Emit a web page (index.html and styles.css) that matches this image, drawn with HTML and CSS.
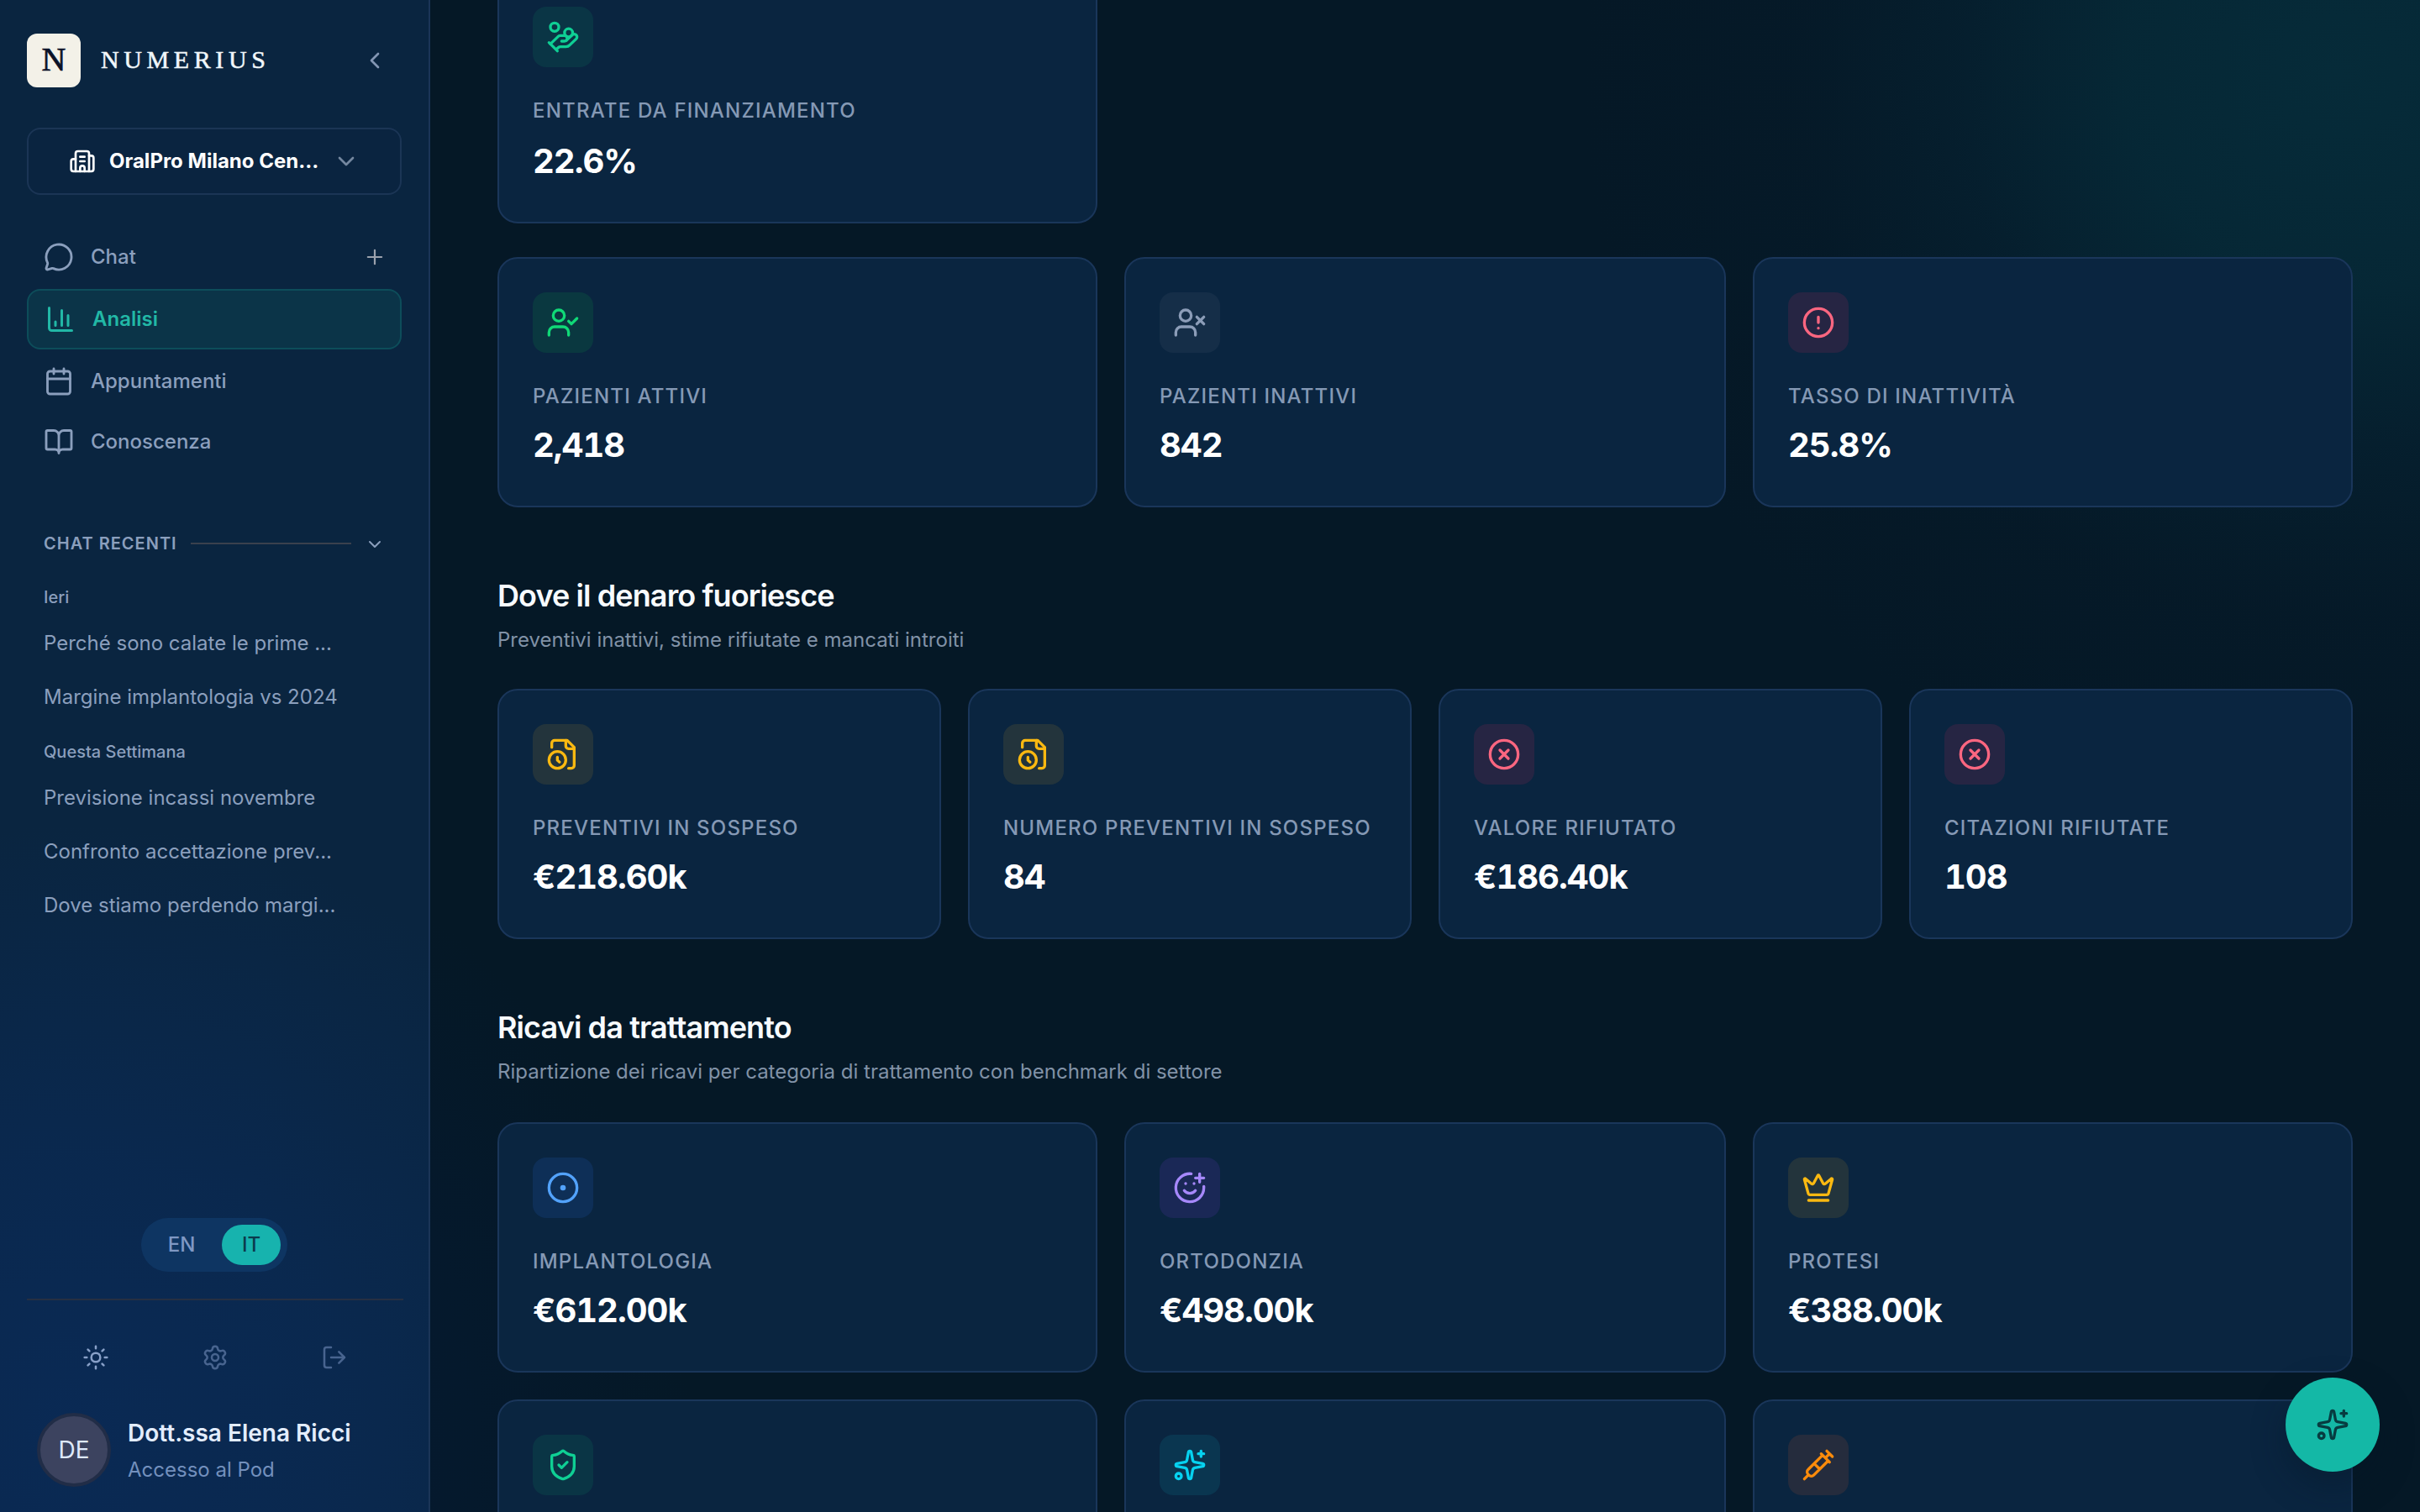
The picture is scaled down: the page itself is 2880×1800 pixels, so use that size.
FILE: index.html
```html
<!DOCTYPE html>
<html lang="it">
<head>
<meta charset="utf-8">
<title>Numerius – Analisi</title>
<link rel="stylesheet" href="styles.css">
</head>
<body>
<svg class="sprite" aria-hidden="true">
  <symbol id="chevron-left" viewBox="0 0 24 24"><path d="m15 18-6-6 6-6"/></symbol>
  <symbol id="chevron-down" viewBox="0 0 24 24"><path d="m6 9 6 6 6-6"/></symbol>
  <symbol id="plus" viewBox="0 0 24 24"><path d="M5 12h14M12 5v14"/></symbol>
  <symbol id="building" viewBox="0 0 24 24"><path d="M10 12h4M10 8h4M14 21v-3a2 2 0 0 0-4 0v3"/><path d="M6 10H4a2 2 0 0 0-2 2v7a2 2 0 0 0 2 2h16a2 2 0 0 0 2-2V9a2 2 0 0 0-2-2h-2"/><path d="M6 21V5a2 2 0 0 1 2-2h8a2 2 0 0 1 2 2v16"/></symbol>
  <symbol id="message" viewBox="0 0 24 24"><path d="M2.992 16.342a2 2 0 0 1 .094 1.167l-1.065 3.29a1 1 0 0 0 1.236 1.168l3.413-.998a2 2 0 0 1 1.099.092 10 10 0 1 0-4.777-4.719"/></symbol>
  <symbol id="chart" viewBox="0 0 24 24"><path d="M3 3v16a2 2 0 0 0 2 2h16M18 17V9M13 17V5M8 17v-3"/></symbol>
  <symbol id="calendar" viewBox="0 0 24 24"><path d="M8 2v4M16 2v4M3 10h18"/><rect x="3" y="4" width="18" height="18" rx="2"/></symbol>
  <symbol id="book" viewBox="0 0 24 24"><path d="M12 7v14M3 18a1 1 0 0 1-1-1V4a1 1 0 0 1 1-1h5a4 4 0 0 1 4 4 4 4 0 0 1 4-4h5a1 1 0 0 1 1 1v13a1 1 0 0 1-1 1h-6a3 3 0 0 0-3 3 3 3 0 0 0-3-3z"/></symbol>
  <symbol id="sun" viewBox="0 0 24 24"><circle cx="12" cy="12" r="4"/><path d="M12 2v2M12 20v2M4.93 4.93l1.41 1.41M17.66 17.66l1.41 1.41M2 12h2M20 12h2M6.34 17.66l-1.41 1.41M19.07 4.93l-1.41 1.41"/></symbol>
  <symbol id="settings" viewBox="0 0 24 24"><path d="M9.671 4.136a2.34 2.34 0 0 1 4.659 0 2.34 2.34 0 0 0 3.319 1.915 2.34 2.34 0 0 1 2.33 4.033 2.34 2.34 0 0 0 0 3.831 2.34 2.34 0 0 1-2.33 4.033 2.34 2.34 0 0 0-3.319 1.915 2.34 2.34 0 0 1-4.659 0 2.34 2.34 0 0 0-3.32-1.915 2.34 2.34 0 0 1-2.33-4.033 2.34 2.34 0 0 0 0-3.831A2.34 2.34 0 0 1 6.35 6.051a2.34 2.34 0 0 0 3.319-1.915"/><circle cx="12" cy="12" r="3"/></symbol>
  <symbol id="logout" viewBox="0 0 24 24"><path d="m16 17 5-5-5-5M21 12H9M9 21H5a2 2 0 0 1-2-2V5a2 2 0 0 1 2-2h4"/></symbol>
  <symbol id="hand-coins" viewBox="0 0 24 24"><path d="M11 15h2a2 2 0 1 0 0-4h-3c-.6 0-1.1.2-1.4.6L3 17"/><path d="m7 21 1.6-1.4c.3-.4.8-.6 1.4-.6h4c1.1 0 2.1-.4 2.8-1.2l4.6-4.4a2 2 0 0 0-2.75-2.91l-4.2 3.9M2 16l6 6"/><circle cx="16" cy="9" r="2.9"/><circle cx="6" cy="5" r="3"/></symbol>
  <symbol id="user-check" viewBox="0 0 24 24"><path d="m16 11 2 2 4-4M16 21v-2a4 4 0 0 0-4-4H6a4 4 0 0 0-4 4v2"/><circle cx="9" cy="7" r="4"/></symbol>
  <symbol id="user-x" viewBox="0 0 24 24"><path d="M16 21v-2a4 4 0 0 0-4-4H6a4 4 0 0 0-4 4v2M17 8l5 5M22 8l-5 5"/><circle cx="9" cy="7" r="4"/></symbol>
  <symbol id="alert" viewBox="0 0 24 24"><circle cx="12" cy="12" r="10"/><path d="M12 8v4M12 16h.01"/></symbol>
  <symbol id="file-clock" viewBox="0 0 24 24"><path d="M16 22h2a2 2 0 0 0 2-2V7l-5-5H6a2 2 0 0 0-2 2v3"/><path d="M14 2v4a2 2 0 0 0 2 2h4"/><circle cx="8" cy="16" r="6"/><path d="M9.5 17.5 8 16.25V14"/></symbol>
  <symbol id="circle-x" viewBox="0 0 24 24"><circle cx="12" cy="12" r="10"/><path d="m15 9-6 6M9 9l6 6"/></symbol>
  <symbol id="circle-dot" viewBox="0 0 24 24"><circle cx="12" cy="12" r="10"/><circle cx="12" cy="12" r="1"/></symbol>
  <symbol id="smile-plus" viewBox="0 0 24 24"><path d="M22 11v1a10 10 0 1 1-9-10"/><path d="M8 14s1.5 2 4 2 4-2 4-2M9 9h.01M15 9h.01M16 5h6M19 2v6"/></symbol>
  <symbol id="crown" viewBox="0 0 24 24"><path d="M11.562 3.266a.5.5 0 0 1 .876 0L15.39 8.87a1 1 0 0 0 1.516.294L21.183 5.5a.5.5 0 0 1 .798.519l-2.834 10.246a1 1 0 0 1-.956.734H5.81a1 1 0 0 1-.957-.734L2.02 6.02a.5.5 0 0 1 .798-.519l4.276 3.664a1 1 0 0 0 1.516-.294z"/><path d="M5 21h14"/></symbol>
  <symbol id="shield" viewBox="0 0 24 24"><path d="M20 13c0 5-3.5 7.5-7.66 8.95a1 1 0 0 1-.67-.01C7.5 20.5 4 18 4 13V6a1 1 0 0 1 1-1c2 0 4.5-1.2 6.24-2.72a1.17 1.17 0 0 1 1.52 0C14.51 3.81 17 5 19 5a1 1 0 0 1 1 1z"/><path d="m9 12 2 2 4-4"/></symbol>
  <symbol id="sparkles" viewBox="0 0 24 24"><path d="M11.017 2.814a1 1 0 0 1 1.966 0l1.051 5.558a2 2 0 0 0 1.594 1.594l5.558 1.051a1 1 0 0 1 0 1.966l-5.558 1.051a2 2 0 0 0-1.594 1.594l-1.051 5.558a1 1 0 0 1-1.966 0l-1.051-5.558a2 2 0 0 0-1.594-1.594l-5.558-1.051a1 1 0 0 1 0-1.966l5.558-1.051a2 2 0 0 0 1.594-1.594zM20 2v4M22 4h-4"/><circle cx="4" cy="20" r="2"/></symbol>
  <symbol id="syringe" viewBox="0 0 24 24"><path d="m18 2 4 4M17 7l3-3M19 9 8.7 19.3c-1 1-2.5 1-3.4 0l-.6-.6c-1-1-1-2.5 0-3.4L15 5M9 11l4 4M5 19l-3 3M14 4l6 6"/></symbol>
</svg>

<div class="app">
  <aside class="sidebar">
    <header class="brand">
      <span class="brand-mark">N</span>
      <span class="brand-name">NUMERIUS</span>
      <svg class="icon brand-collapse"><use href="#chevron-left"/></svg>
    </header>

    <button class="clinic">
      <svg class="icon"><use href="#building"/></svg>
      <span class="clinic-name">OralPro Milano Cen...</span>
      <svg class="icon clinic-chevron"><use href="#chevron-down"/></svg>
    </button>

    <nav class="nav">
      <a class="nav-item"><svg class="icon"><use href="#message"/></svg><span>Chat</span><svg class="icon nav-plus"><use href="#plus"/></svg></a>
      <a class="nav-item nav-item-active"><svg class="icon"><use href="#chart"/></svg><span>Analisi</span></a>
      <a class="nav-item"><svg class="icon"><use href="#calendar"/></svg><span>Appuntamenti</span></a>
      <a class="nav-item"><svg class="icon"><use href="#book"/></svg><span>Conoscenza</span></a>
    </nav>

    <section class="recent">
      <div class="recent-head"><span>CHAT RECENTI</span><i class="recent-line"></i><svg class="icon"><use href="#chevron-down"/></svg></div>
      <div class="recent-group">Ieri</div>
      <a class="recent-item">Perché sono calate le prime ...</a>
      <a class="recent-item">Margine implantologia vs 2024</a>
      <div class="recent-group recent-group-next">Questa Settimana</div>
      <a class="recent-item">Previsione incassi novembre</a>
      <a class="recent-item">Confronto accettazione prev...</a>
      <a class="recent-item">Dove stiamo perdendo margi...</a>
    </section>

    <footer class="foot">
      <div class="lang"><span class="lang-option">EN</span><span class="lang-option lang-option-on">IT</span></div>
      <div class="foot-actions">
        <svg class="icon foot-sun"><use href="#sun"/></svg>
        <svg class="icon"><use href="#settings"/></svg>
        <svg class="icon"><use href="#logout"/></svg>
      </div>
      <div class="user">
        <span class="avatar">DE</span>
        <div><div class="user-name">Dott.ssa Elena Ricci</div><div class="user-role">Accesso al Pod</div></div>
      </div>
    </footer>
  </aside>

  <main class="main">
    <div class="grid grid-3 grid-first">
      <article class="card"><span class="tile emerald"><svg class="icon"><use href="#hand-coins"/></svg></span><div class="label">ENTRATE DA FINANZIAMENTO</div><div class="value">22.6%</div></article>
    </div>
    <div class="grid grid-3">
      <article class="card"><span class="tile green"><svg class="icon"><use href="#user-check"/></svg></span><div class="label">PAZIENTI ATTIVI</div><div class="value">2,418</div></article>
      <article class="card"><span class="tile slate"><svg class="icon"><use href="#user-x"/></svg></span><div class="label">PAZIENTI INATTIVI</div><div class="value">842</div></article>
      <article class="card"><span class="tile rose"><svg class="icon"><use href="#alert"/></svg></span><div class="label">TASSO DI INATTIVITÀ</div><div class="value">25.8%</div></article>
    </div>

    <div class="section-head section-head-tight">
      <h2>Dove il denaro fuoriesce</h2>
      <p>Preventivi inattivi, stime rifiutate e mancati introiti</p>
    </div>
    <div class="grid grid-4">
      <article class="card"><span class="tile amber"><svg class="icon"><use href="#file-clock"/></svg></span><div class="label">PREVENTIVI IN SOSPESO</div><div class="value">€218.60k</div></article>
      <article class="card"><span class="tile amber"><svg class="icon"><use href="#file-clock"/></svg></span><div class="label">NUMERO PREVENTIVI IN SOSPESO</div><div class="value">84</div></article>
      <article class="card"><span class="tile rose"><svg class="icon"><use href="#circle-x"/></svg></span><div class="label">VALORE RIFIUTATO</div><div class="value">€186.40k</div></article>
      <article class="card"><span class="tile rose"><svg class="icon"><use href="#circle-x"/></svg></span><div class="label">CITAZIONI RIFIUTATE</div><div class="value">108</div></article>
    </div>

    <div class="section-head">
      <h2>Ricavi da trattamento</h2>
      <p>Ripartizione dei ricavi per categoria di trattamento con benchmark di settore</p>
    </div>
    <div class="grid grid-3">
      <article class="card"><span class="tile blue"><svg class="icon"><use href="#circle-dot"/></svg></span><div class="label">IMPLANTOLOGIA</div><div class="value">€612.00k</div></article>
      <article class="card"><span class="tile violet"><svg class="icon"><use href="#smile-plus"/></svg></span><div class="label">ORTODONZIA</div><div class="value">€498.00k</div></article>
      <article class="card"><span class="tile amber"><svg class="icon"><use href="#crown"/></svg></span><div class="label">PROTESI</div><div class="value">€388.00k</div></article>
      <article class="card"><span class="tile emerald"><svg class="icon"><use href="#shield"/></svg></span></article>
      <article class="card"><span class="tile cyan"><svg class="icon"><use href="#sparkles"/></svg></span></article>
      <article class="card"><span class="tile orange"><svg class="icon"><use href="#syringe"/></svg></span></article>
    </div>
  </main>
</div>

<button class="fab"><svg class="icon"><use href="#sparkles"/></svg></button>
</body>
</html>
```
FILE: styles.css
```css
* { box-sizing: border-box; }

body {
  margin: 0;
  height: 1800px;
  overflow: hidden;
  background: #051826;
  color: #fff;
  font-family: Inter, "Liberation Sans", sans-serif;
  font-size: 24px;
}

.sprite { display: none; }

.icon {
  flex: none;
  display: block;
  width: 32px;
  height: 32px;
  fill: none;
  stroke: currentColor;
  stroke-width: 2;
  stroke-linecap: round;
  stroke-linejoin: round;
}

button {
  margin: 0;
  font: inherit;
  color: inherit;
}

.app {
  display: flex;
  height: 1800px;
}

/* Sidebar */

.sidebar {
  flex: none;
  display: flex;
  flex-direction: column;
  width: 512px;
  padding: 40px 32px 30px;
  border-right: 2px solid #1b3557;
  background:
    radial-gradient(circle 720px at 90px 1700px, rgba(10, 48, 112, .42), rgba(10, 48, 112, .3) 45%, rgba(10, 48, 112, 0)),
    #0a2540;
}

.brand {
  display: flex;
  align-items: center;
  height: 64px;
}

.brand-mark {
  display: flex;
  align-items: center;
  justify-content: center;
  width: 64px;
  height: 64px;
  padding-bottom: 2px;
  border-radius: 12px;
  background: #f3f1e8;
  color: #0b1228;
  font: 40px/62px "Liberation Serif", serif;
  -webkit-text-stroke: .7px currentColor;
}

.brand-name {
  margin-left: 24px;
  padding-bottom: 3px;
  color: #f1f7fa;
  font: 30px/61px "Liberation Serif", serif;
  letter-spacing: 5.6px;
  -webkit-text-stroke: .5px currentColor;
}

.brand-collapse {
  margin: 0 16px 0 auto;
  color: #8396b3;
}

.clinic {
  display: flex;
  align-items: center;
  height: 80px;
  margin-top: 48px;
  padding: 0 48px;
  border: 2px solid #1b3555;
  border-radius: 16px;
  background: #0a2440;
}

.clinic-name {
  margin-left: 16px;
  padding-bottom: 1px;
  font-weight: 700;
}

.clinic-chevron {
  margin-left: auto;
  color: #74879f;
}

.nav {
  display: flex;
  flex-direction: column;
  gap: 4px;
  margin-top: 40px;
}

.nav-item {
  display: flex;
  align-items: center;
  gap: 20px;
  height: 68px;
  padding: 0 18px 0 20px;
  color: #8b9fbd;
  font-weight: 500;
}

.nav-item span { padding-bottom: 2px; }

.nav-item .icon {
  width: 36px;
  height: 36px;
  stroke-width: 1.9;
}

.nav-item-active {
  height: 72px;
  border: 2px solid #0d4d5a;
  border-radius: 16px;
  background: #0b3448;
  color: #22b8a6;
  font-weight: 600;
}

.nav-item-active .icon { stroke-width: 2; }

.nav-item .nav-plus {
  width: 28px;
  height: 28px;
  margin-left: auto;
  color: #9ba1ad;
}

.recent {
  margin-top: 75px;
  padding: 0 20px;
  color: #8b9fbd;
}

.recent-head {
  display: flex;
  align-items: center;
  height: 24px;
  font-size: 20px;
  font-weight: 600;
  letter-spacing: 1px;
}

.recent-line {
  flex: 1;
  height: 2px;
  margin: 0 16px;
  background: #3a414d;
}

.recent-head .icon {
  width: 24px;
  height: 24px;
  margin-top: 2px;
}

.recent-group {
  margin: 40px 0 11px;
  font-size: 20px;
  font-weight: 500;
  line-height: 24px;
}

.recent-group-next { margin-top: 21px; }

.recent-item {
  display: block;
  line-height: 64px;
}

.foot { margin-top: auto; }

.lang {
  display: flex;
  justify-content: space-between;
  width: 174px;
  height: 64px;
  margin: 0 auto;
  padding: 8px;
  border-radius: 32px;
  background: #0e3562;
}

.lang-option {
  width: 80px;
  color: #7f98c4;
  font-weight: 500;
  line-height: 48px;
  text-align: center;
}

.lang-option-on {
  width: 70px;
  border-radius: 24px;
  background: #17b3ae;
  color: #0b3b4c;
}

.foot-actions {
  display: grid;
  grid-template-columns: repeat(3, 142px);
  justify-content: center;
  justify-items: center;
  margin: 32px -2px 0 0;
  padding-top: 52px;
  border-top: 2px solid #262f42;
  color: #48648f;
}

.foot-actions .icon { stroke-width: 1.9; }

.foot-sun { color: #88a0c8; }

.user {
  display: flex;
  align-items: center;
  gap: 20px;
  margin-top: 50px;
  padding-left: 12px;
}

.avatar {
  width: 88px;
  height: 88px;
  border: 4px solid #212d47;
  border-radius: 50%;
  background: #3c435f;
  color: #dfe9fc;
  font-size: 28px;
  line-height: 80px;
  text-align: center;
}

.user-name {
  color: #e3edfd;
  font-size: 28px;
  font-weight: 600;
  line-height: 48px;
}

.user-role {
  color: #7390bd;
  line-height: 40px;
}

/* Main column */

.main {
  flex: 1;
  min-width: 0;
  padding: 0 80px;
  overflow: hidden;
  background:
    radial-gradient(circle 900px at 2270px 90px, #062b39, rgba(6, 42, 56, .86) 28%, rgba(6, 36, 52, .55) 50%, rgba(6, 30, 46, .22) 72%, rgba(5, 24, 38, 0)),
    radial-gradient(circle 760px at -450px 1700px, rgba(5, 28, 64, .7), rgba(5, 24, 48, 0));
}

.grid {
  display: grid;
  gap: 32px;
}

.grid-3 { grid-template-columns: 714px 1fr 714px; }

.grid-4 { grid-template-columns: repeat(4, 1fr); }

/* The column is scrolled, so the first row starts above the fold */
.grid-first { margin: -34px 0 40px; }

.grid-first .value { margin-top: 9px; }

.card {
  height: 298px;
  padding: 40px;
  border: 2px solid #1a365a;
  border-radius: 24px;
  background: #0a2540;
}

.grid-first .card { height: 300px; }

.tile {
  display: flex;
  align-items: center;
  justify-content: center;
  width: 72px;
  height: 72px;
  border-radius: 16px;
}

.tile .icon {
  width: 40px;
  height: 40px;
}

.emerald { background: #0a3545; color: #0fcf94; }
.green { background: #0a3840; color: #10d977; }
.slate { background: #152e48; color: #8c9db8; }
.rose { background: #262543; color: #fb6680; }
.amber { background: #23343c; color: #fbb911; }
.blue { background: #0e2f57; color: #52a2fb; }
.violet { background: #1a2856; color: #a688fb; }
.cyan { background: #0a3650; color: #06d2f0; }
.orange { background: #252c3d; color: #fb8b0b; }

.label {
  margin-top: 33px;
  color: #8599b5;
  font-weight: 500;
  letter-spacing: 1.2px;
  line-height: 38px;
  white-space: nowrap;
}

.value {
  margin-top: 7px;
  font-size: 40px;
  font-weight: 700;
  font-variant-numeric: tabular-nums;
  letter-spacing: -1px;
  line-height: 64px;
}

.section-head { padding: 80px 0 42px; }

.section-head-tight { padding-bottom: 40px; }

h2 {
  margin: 0;
  color: #f8fbfe;
  font-size: 36px;
  font-weight: 600;
  letter-spacing: -.9px;
  line-height: 50px;
}

.section-head p {
  margin: 10px 0 0;
  color: #8192a7;
  line-height: 36px;
}

/* Floating assistant button */

.fab {
  position: absolute;
  left: 2720px;
  top: 1640px;
  display: flex;
  align-items: center;
  justify-content: center;
  width: 112px;
  height: 112px;
  padding: 0;
  border: 0;
  border-radius: 50%;
  background: #14b8a6;
  color: #073c40;
  box-shadow: 0 16px 40px rgba(4, 22, 38, .4);
}

.fab .icon {
  width: 40px;
  height: 40px;
}
```
